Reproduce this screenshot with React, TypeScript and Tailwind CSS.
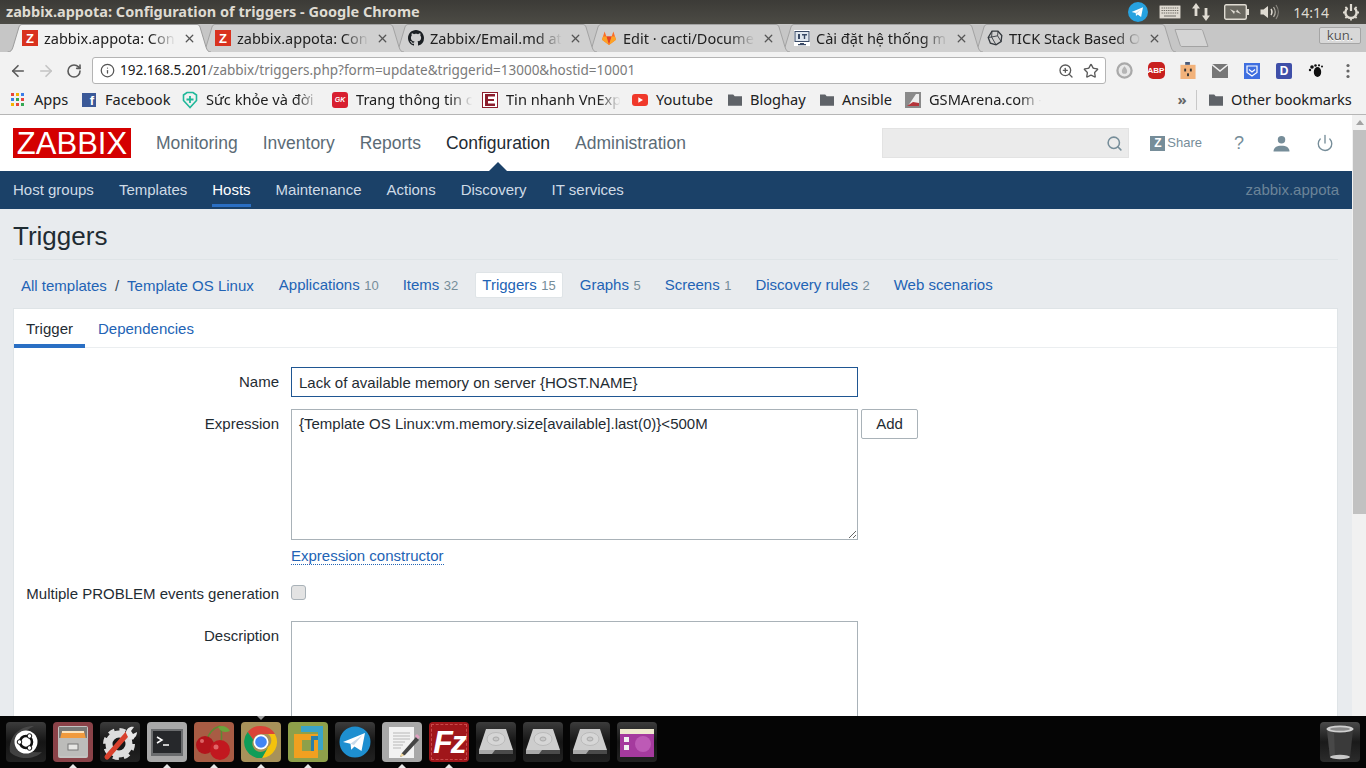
import React from 'react';
import { ArrowLeft, ArrowRight, RotateCw, Info, ZoomIn, Star, Search, Power, X } from 'lucide-react';

const uiFont = 'font-["Noto_Sans",sans-serif]';

function ZFav() {
  return (
    <span className="flex h-4 w-4 items-center justify-center bg-[#d9321f] font-['Liberation_Sans',sans-serif] text-[13px] font-bold leading-none text-white">
      Z
    </span>
  );
}

function GithubFav() {
  return (
    <svg viewBox="0 0 16 16" className="h-4 w-4" fill="#1b1f23">
      <path d="M8 0C3.58 0 0 3.58 0 8c0 3.54 2.29 6.53 5.47 7.59.4.07.55-.17.55-.38 0-.19-.01-.82-.01-1.49-2.01.37-2.53-.49-2.69-.94-.09-.23-.48-.94-.82-1.13-.28-.15-.68-.52-.01-.53.63-.01 1.08.58 1.23.82.72 1.21 1.87.87 2.33.66.07-.52.28-.87.51-1.07-1.78-.2-3.64-.89-3.64-3.95 0-.87.31-1.59.82-2.15-.08-.2-.36-1.02.08-2.12 0 0 .67-.21 2.2.82.64-.18 1.32-.27 2-.27s1.36.09 2 .27c1.53-1.04 2.2-.82 2.2-.82.44 1.1.16 1.92.08 2.12.51.56.82 1.27.82 2.15 0 3.07-1.87 3.75-3.65 3.95.29.25.54.73.54 1.48 0 1.07-.01 1.93-.01 2.2 0 .21.15.46.55.38A8.01 8.01 0 0 0 16 8c0-4.42-3.58-8-8-8z" />
    </svg>
  );
}

function GitlabFav() {
  return (
    <svg viewBox="0 0 16 16" className="h-4 w-4">
      <path d="M8 15 1 9.8l1-3.2L3.6 1.5 5.4 6.6h5.2l1.8-5.1L14 6.6l1 3.2z" fill="#fc6d26" />
      <path d="M8 15 5.4 6.6h5.2z" fill="#e24329" />
      <path d="M1 9.8 8 15 5.4 6.6H2z" fill="#fca326" />
      <path d="M15 9.8 8 15l2.6-8.4H14z" fill="#fca326" />
    </svg>
  );
}

function ItFav() {
  return (
    <svg viewBox="0 0 16 16" className="h-4 w-4">
      <rect width="16" height="16" fill="#fff" />
      <rect x="1" y="1.5" width="14" height="10" fill="#dfe6ee" stroke="#3a4a66" />
      <path d="M4 4h2v5H4zM8 4h5v1.4h-1.8V9H9.8V5.4H8z" fill="#3a4a66" />
      <path d="M6 13h4v1H6zM4 14h8v1.2H4z" fill="#3a4a66" />
    </svg>
  );
}

function TickFav() {
  return (
    <svg viewBox="0 0 16 16" className="h-4 w-4" fill="none" stroke="#33383d" strokeWidth="1.3">
      <path d="M5 1.2h6l3.8 4.3-.7 6L9 14.8l-5.6-1.6L1.2 7.5z" />
      <path d="M5 1.2 4.6 7l4.4 7.8M4.6 7 1.2 7.5M4.6 7l6-1.2 3.5 5.7M10.6 5.8 11 1.2" strokeWidth="0.9" />
    </svg>
  );
}

function Folder() {
  return (
    <svg viewBox="0 0 16 16" className="h-4 w-4" fill="#5f6368">
      <path d="M1 2.5h5.2l1.5 1.7H15v9.5H1z" />
    </svg>
  );
}

const tabs = [
  { title: 'zabbix.appota: Con', icon: <ZFav />, active: true, z: 'z-[6]' },
  { title: 'zabbix.appota: Con', icon: <ZFav />, active: false, z: 'z-[5]' },
  { title: 'Zabbix/Email.md at', icon: <GithubFav />, active: false, z: 'z-[4]' },
  { title: 'Edit · cacti/Docume', icon: <GitlabFav />, active: false, z: 'z-[3]' },
  { title: 'Cài đặt hệ thống m', icon: <ItFav />, active: false, z: 'z-[2]' },
  { title: 'TICK Stack Based O', icon: <TickFav />, active: false, z: 'z-[1]' },
];

function BrowserTab({ title, icon, active, z, first }: { title: string; icon: React.ReactNode; active: boolean; z: string; first: boolean }) {
  return (
    <div className={`relative flex h-[28px] w-[204px] shrink-0 items-center pl-[15px] ${z} ${first ? '' : '-ml-[11px]'}`}>
      <svg viewBox="0 0 204 28" className="absolute inset-0 h-full w-full">
        <path
          d="M0.5 28 C4 28 5 26 6 23 L12 3 C12.5 1.5 13.5 0.5 15 0.5 H190 C191.5 0.5 192.5 1.5 193 3 L199 23 C200 26 201 28 204 28"
          fill={active ? '#f2f2f2' : '#d0d0d0'}
          stroke={active ? '#9c9c9c' : '#a3a3a3'}
        />
      </svg>
      <span className="relative shrink-0">{icon}</span>
      <span className={`relative ml-[6px] w-[136px] overflow-hidden whitespace-nowrap text-[14.5px] leading-[28px] text-[#202020] ${uiFont} [mask-image:linear-gradient(to_right,black_78%,transparent_97%)]`}>
        {title}
      </span>
      <X className="relative ml-[3px] h-[13px] w-[13px] text-[#555]" strokeWidth={2.4} />
    </div>
  );
}

function TopIndicators() {
  return (
    <div className="ml-auto flex items-center font-normal text-[#dfdbd2]">
      <svg viewBox="0 0 20 20" className="h-5 w-5">
        <circle cx="10" cy="10" r="10" fill="#27a2e0" />
        <path d="M3.6 9.9 15 5.3l-1.9 9.6-3.4-2.4-1.7 1.6-.3-3z" fill="#fff" />
        <path d="m7.7 11.1 5.3-4-4.2 4.6" fill="#c8daea" />
      </svg>
      <svg viewBox="0 0 22 14" className="ml-[11px] h-[14px] w-[22px]">
        <rect x="0.5" y="0.5" width="21" height="13" rx="1" fill="#dfdbd2" stroke="#8a8780" />
        <path d="M2.5 3h17M2.5 5.5h17M2.5 8h17" stroke="#6f6d66" strokeDasharray="1.4 .8" />
        <path d="M5 11h12" stroke="#6f6d66" />
      </svg>
      <svg viewBox="0 0 18 20" className="ml-[11px] h-5 w-[18px]" fill="#dfdbd2">
        <path d="M4 1 8 6.5H5.4V14H2.6V6.5H0zM14 19l-4-5.500h2.600V6h2.800v7.500H18z" />
      </svg>
      <svg viewBox="0 0 25 16" className="ml-[14px] h-4 w-[25px]">
        <rect x="0.7" y="0.7" width="21.600" height="14.600" rx="1.500" fill="#6a6860" stroke="#dfdbd2" strokeWidth="1.400" />
        <rect x="23" y="5" width="2" height="6" fill="#dfdbd2" />
        <path d="m6 5 6 3 1-2.500 4 4.500-6-2.500-1 2.500z" fill="#dfdbd2" />
      </svg>
      <svg viewBox="0 0 20 18" className="ml-[11px] h-[18px] w-5" fill="none" stroke="#dfdbd2">
        <path d="M0.5 6.500h3L8 3v12l-4.500-3.500h-3z" fill="#dfdbd2" stroke="none" />
        <path d="M11 6c1.200 1.800 1.200 4.200 0 6" strokeWidth="1.500" />
        <path d="M13.500 4c2.100 3 2.100 7 0 10" strokeWidth="1.300" opacity="0.700" />
        <path d="M16 2c3 4.200 3 9.800 0 14" strokeWidth="1.200" opacity="0.450" />
      </svg>
      <span className={`ml-[13px] text-[14px] ${uiFont}`}>14:14</span>
      <svg viewBox="0 0 18 18" className="ml-[13px] mr-[6px] h-[18px] w-[18px]" fill="none" stroke="#dfdbd2">
        <path d="M5.600 5a5.600 5.600 0 1 0 6.800 0" strokeWidth="2.400" />
        <path d="M9 1v7" strokeWidth="2.200" />
        <path d="M9 15.500v2M1 9.500h2M15 9.500h2M3.400 3.900l1.400 1.400M13.200 13.700l1.400 1.400M3.400 15.100l1.400-1.400M13.200 5.300l1.400-1.400" strokeWidth="1.800" />
      </svg>
    </div>
  );
}

function ExtIcons() {
  return (
    <div className="ml-[2px] flex items-center">
      <span className="flex w-8 justify-center">
        <svg viewBox="0 0 18 18" className="h-[17px] w-[17px]">
          <circle cx="9" cy="9" r="7.500" fill="#e8e8e8" stroke="#a9a9a9" strokeWidth="2.400" />
          <path d="M9 4.500c2 2.500 2.800 3.800 2.800 5.200a2.800 2.800 0 0 1-5.600 0C6.200 8.300 7 7 9 4.500z" fill="#b5b5b5" />
        </svg>
      </span>
      <span className="flex w-8 justify-center">
        <span className="flex h-[17px] w-[17px] items-center justify-center rounded-[5px] bg-[#c8201e] font-['Liberation_Sans',sans-serif] text-[8px] font-bold leading-none text-white">
          ABP
        </span>
      </span>
      <span className="flex w-8 justify-center">
        <svg viewBox="0 0 16 18" className="h-[17px] w-[16px]">
          <rect x="0" y="3" width="16" height="15" fill="#f2b27a" />
          <rect x="5" y="0" width="5" height="3" fill="#4a5a78" />
          <rect x="4" y="7" width="2" height="3" fill="#333" />
          <rect x="10" y="7" width="2" height="3" fill="#333" />
          <rect x="7" y="12" width="2" height="3" fill="#333" />
        </svg>
      </span>
      <span className="flex w-8 justify-center">
        <svg viewBox="0 0 16 14" className="h-[14px] w-4">
          <rect width="16" height="14" fill="#777" />
          <path d="M0 .5 8 7l8-6.500" fill="none" stroke="#f2f2f2" strokeWidth="1.400" />
        </svg>
      </span>
      <span className="flex w-8 justify-center">
        <svg viewBox="0 0 16 16" className="h-4 w-4">
          <rect width="16" height="16" fill="#3f6fe0" />
          <path d="M3 3h10v6.500L8 13 3 9.500z" fill="none" stroke="#fff" strokeWidth="1.200" />
          <path d="M5 6.500 8 9l3-2.500" fill="none" stroke="#fff" strokeWidth="1.200" />
        </svg>
      </span>
      <span className="flex w-8 justify-center">
        <span className="flex h-4 w-4 items-center justify-center rounded-[2px] bg-[#3f4fa8] font-['Liberation_Sans',sans-serif] text-[12px] font-bold leading-none text-white">
          D
        </span>
      </span>
      <span className="flex w-8 justify-center">
        <svg viewBox="0 0 16 16" className="h-4 w-4" fill="#111">
          <ellipse cx="9.500" cy="9" rx="3.700" ry="5" />
          <circle cx="4" cy="4" r="1.800" />
          <circle cx="7.500" cy="2.500" r="1.300" />
          <circle cx="2" cy="7" r="1.200" />
          <circle cx="11" cy="2.300" r="1.100" />
          <circle cx="14" cy="3.500" r="1" />
        </svg>
      </span>
      <span className="flex w-8 justify-center">
        <svg viewBox="0 0 4 16" className="h-4 w-1" fill="#666">
          <circle cx="2" cy="2.500" r="1.600" />
          <circle cx="2" cy="8" r="1.600" />
          <circle cx="2" cy="13.500" r="1.600" />
        </svg>
      </span>
    </div>
  );
}

function AppsGrid() {
  const colors = ['#e8453c', '#f4b400', '#3a7de8', '#3a7de8', '#34a853', '#e8453c', '#f4b400', '#e8453c', '#34a853'];
  return (
    <span className="grid h-[13px] w-[13px] grid-cols-3 gap-[2px]">
      {colors.map((c, i) => (
        <span key={i} className="h-[3px] w-[3px]" style={{ backgroundColor: c }} />
      ))}
    </span>
  );
}

function BookmarkBar() {
  const fadeText = '[mask-image:linear-gradient(to_right,black_78%,transparent_97%)] overflow-hidden';
  return (
    <div className={`flex h-[29px] shrink-0 items-center border-b border-[#b6b6b6] bg-[#f2f2f2] pb-[1px] pl-[11px] text-[14.6px] text-[#202020] ${uiFont}`}>
      <AppsGrid />
      <span className="ml-[10px] w-[35px] whitespace-nowrap">Apps</span>
      <span className="ml-[13px] flex h-[14px] w-[14px] items-end justify-end bg-[#3b5998] pr-[2px] font-['Liberation_Sans',sans-serif] text-[13px] font-bold leading-none text-white">f</span>
      <span className="ml-[9px] w-[65px] whitespace-nowrap">Facebook</span>
      <svg viewBox="0 0 16 18" className="ml-[12px] h-[18px] w-4" fill="none" stroke="#1fb89a" strokeWidth="1.600">
        <path d="M8 16.500 1.500 9.500V4L5 1.500h6L14.500 4v5.500z" />
        <path d="M8 5v7M4.500 8.500h7" strokeWidth="1.800" />
      </svg>
      <span className={`ml-[8px] w-[116px] whitespace-nowrap ${fadeText}`}>Sức khỏe và đời</span>
      <span className="ml-[10px] flex h-4 w-4 items-center justify-center rounded-[3px] bg-[#d81f30] font-['Liberation_Sans',sans-serif] text-[7px] font-bold italic leading-none text-white">GK</span>
      <span className={`ml-[8px] w-[120px] whitespace-nowrap ${fadeText}`}>Trang thông tin c</span>
      <svg viewBox="0 0 16 16" className="ml-[6px] h-4 w-4">
        <rect x="0.500" y="0.500" width="15" height="15" fill="#fff" stroke="#8c1d2c" />
        <path d="M3 2h10v2.500H6V7h6v2H6v2.500h7V14H3z" fill="#8c1d2c" />
      </svg>
      <span className={`ml-[8px] w-[118px] whitespace-nowrap ${fadeText}`}>Tin nhanh VnExp</span>
      <svg viewBox="0 0 16 16" className="ml-[8px] h-4 w-4">
        <rect x="0" y="2" width="16" height="12" rx="3" fill="#f0392b" />
        <path d="m6.300 5.200 4.700 2.800-4.700 2.800z" fill="#fff" />
      </svg>
      <span className="ml-[8px] w-[58px] whitespace-nowrap">Youtube</span>
      <span className="ml-[13px]"><Folder /></span>
      <span className="ml-[7px] w-[56px] whitespace-nowrap">Bloghay</span>
      <span className="ml-[13px]"><Folder /></span>
      <span className="ml-[7px] w-[52px] whitespace-nowrap">Ansible</span>
      <svg viewBox="0 0 16 16" className="ml-[11px] h-4 w-4">
        <rect width="16" height="16" fill="#8a8a8a" />
        <path d="M3 14 11 2h3v9z" fill="#eee" />
        <path d="M2 14h12v-3L8 10z" fill="#b5343a" />
      </svg>
      <span className={`ml-[8px] w-[116px] whitespace-nowrap ${fadeText}`}>GSMArena.com -</span>
      <span className="ml-[130px] w-[14px] text-center text-[15px] font-bold leading-none text-[#666]">»</span>
      <span className="ml-[7px] h-[20px] w-px bg-[#c8c8c8]" />
      <span className="ml-[11px]"><Folder /></span>
      <span className="ml-[7px] whitespace-nowrap">Other bookmarks</span>
    </div>
  );
}

function ChromeFrame() {
  return (
    <div className="shrink-0">
      <div className={`flex h-[24px] items-center bg-gradient-to-b from-[#3c3b37] to-[#4c4b45] pl-[6px] text-[14.5px] font-bold text-[#dfdbd2] ${uiFont}`}>
        <span className="whitespace-nowrap">zabbix.appota: Configuration of triggers - Google Chrome</span>
        <TopIndicators />
      </div>
      <div className="relative flex h-[28px] items-end overflow-hidden bg-[#c6c6c6] pl-[7px]">
        {tabs.map((t, i) => (
          <BrowserTab key={i} title={t.title} icon={t.icon} active={t.active} z={t.z} first={i === 0} />
        ))}
        <svg viewBox="0 0 36 18" className="-ml-[2px] mb-[5px] h-[18px] w-[36px]">
          <path d="M1 .5h26c1 0 1.500.5 2 2L34 17.500H8c-1 0-1.500-.5-2-2z" fill="#d4d4d4" stroke="#a3a3a3" />
        </svg>
        <span className="absolute right-[5px] top-[3px] flex h-[17px] w-[42px] items-center justify-center rounded-[2px] border border-[#a5a5a5] bg-[#d8d8d8] text-[13px] text-[#555] [text-shadow:0_1px_0_#fff]">
          <span className={uiFont}>kun.</span>
        </span>
      </div>
      <div className="flex h-[34px] items-center bg-[#f2f2f2] pl-[4px] pt-[3px]">
        <span className="flex w-7 justify-center"><ArrowLeft className="h-[18px] w-[18px] text-[#5a5a5a]" strokeWidth={2.200} /></span>
        <span className="flex w-7 justify-center"><ArrowRight className="h-[18px] w-[18px] text-[#c4c4c4]" strokeWidth={2.200} /></span>
        <span className="flex w-7 justify-center"><RotateCw className="h-[16px] w-[16px] text-[#5a5a5a]" strokeWidth={2.400} /></span>
        <div className="ml-[4px] flex h-[27px] w-[1014px] items-center rounded-[3px] border border-[#b4b4b4] bg-white pl-[7px] pr-[6px]">
          <Info className="h-[15px] w-[15px] text-[#555]" strokeWidth={2} />
          <span className={`ml-[5px] text-[13.500px] text-[#202020] ${uiFont}`}>
            192.168.5.201<span className="text-[#7a7a7a]">/zabbix/triggers.php?form=update&amp;triggerid=13000&amp;hostid=10001</span>
          </span>
          <ZoomIn className="ml-auto h-[16px] w-[16px] text-[#5a5a5a]" strokeWidth={2} />
          <Star className="ml-[9px] h-[16px] w-[16px] text-[#5a5a5a]" strokeWidth={2} />
        </div>
        <ExtIcons />
      </div>
      <BookmarkBar />
    </div>
  );
}

function ZabbixHeader() {
  return (
    <>
      <div className="flex h-[56px] items-center bg-white pl-[13px]">
        <span className="flex h-[30px] w-[118px] items-center justify-center bg-[#d40000] text-[31px] leading-none text-white">ZABBIX</span>
        <nav className="ml-[25px] flex gap-[25px] text-[17.500px] text-[#5b6b76]">
          <span>Monitoring</span>
          <span>Inventory</span>
          <span>Reports</span>
          <span className="relative text-[#1f2c33]">
            Configuration
            <span className="absolute left-1/2 top-[32px] h-0 w-0 -translate-x-1/2 border-x-[10px] border-b-[10px] border-x-transparent border-b-[#1b4168]" />
          </span>
          <span>Administration</span>
        </nav>
        <div className="ml-auto flex h-[30px] w-[247px] items-center justify-end border border-[#e3e3e3] bg-[#ebebeb] pr-[5px]">
          <Search className="h-[17px] w-[17px] text-[#768d99]" strokeWidth={2.200} />
        </div>
        <span className="ml-[21px] flex h-[15px] w-[15px] items-center justify-center bg-[#768d99] text-[12px] font-bold leading-none text-white">Z</span>
        <span className="ml-[2px] text-[13px] text-[#768d99]">Share</span>
        <span className="ml-[32px] w-[10px] text-center text-[18px] text-[#768d99]">?</span>
        <svg viewBox="0 0 16 16" className="ml-[29px] h-[17px] w-[17px]" fill="#768d99">
          <circle cx="8" cy="4.500" r="3.500" />
          <path d="M0.500 15.500c0-4 3-5.500 7.500-5.500s7.500 1.500 7.500 5.500z" />
        </svg>
        <Power className="ml-[26px] mr-[18px] h-[18px] w-[18px] text-[#768d99]" strokeWidth={1.800} />
      </div>
      <div className="flex h-[38px] items-center bg-[#1b4168] pl-[13px] pr-[13px] text-[15px] text-[#cfdbe6]">
        <div className="flex h-full gap-[25px]">
          {['Host groups', 'Templates', 'Hosts', 'Maintenance', 'Actions', 'Discovery', 'IT services'].map((s) => (
            <span
              key={s}
              className={s === 'Hosts' ? 'flex h-[36px] items-center border-b-[3px] border-[#2a6fc4] pt-[5px] text-white' : 'flex items-center'}
            >
              {s}
            </span>
          ))}
        </div>
        <span className="ml-auto text-[#6b8498]">zabbix.appota</span>
      </div>
    </>
  );
}

function SubNav() {
  const items: [string, string][] = [
    ['Applications', '10'],
    ['Items', '32'],
    ['Triggers', '15'],
    ['Graphs', '5'],
    ['Screens', '1'],
    ['Discovery rules', '2'],
    ['Web scenarios', ''],
  ];
  return (
    <div className="flex h-[48px] items-center pl-[8px] pt-[1px] text-[15px] text-[#2263b5]">
      <span className="pt-[4px]">All templates</span>
      <span className="mx-[8px] pt-[4px] text-[#3a4a55]">/</span>
      <span className="pt-[4px]">Template OS Linux</span>
      <div className="ml-[13px] flex items-center">
        {items.map(([name, n]) => {
          let cls = 'mx-[12px] flex h-[26px] items-center pt-[2px]';
          if (name === 'Triggers') cls = 'mx-[5px] flex h-[26px] items-center rounded-[2px] border border-[#dfe4e7] bg-white px-[6px] pt-[2px]';
          return (
            <span key={name} className={cls}>
              {name}
              {n && <span className="ml-[4.500px] text-[13px] text-[#768d99]">{n}</span>}
            </span>
          );
        })}
      </div>
    </div>
  );
}

function TriggerForm() {
  const label = 'w-[265px] shrink-0 text-right text-[#1f2c33]';
  return (
    <div className="border border-b-0 border-[#dfe4e7] bg-white text-[15px] text-[#1f2c33]">
      <div className="flex h-[39px] border-b border-[#ebeef0]">
        <span className="flex h-[39px] w-[71px] items-center justify-center border-b-[4px] border-[#2a6fc4] pt-[5px]">Trigger</span>
        <span className="ml-[13px] flex items-center pt-[2px] text-[#2263b5]">Dependencies</span>
      </div>
      <div className="flex flex-col pt-[19px]">
        <div className="flex items-center">
          <span className={label}>Name</span>
          <input
            readOnly
            value="Lack of available memory on server {HOST.NAME}"
            className="ml-[12px] h-[30px] w-[567px] border border-[#1f5692] px-[7px] outline-none"
          />
        </div>
        <div className="mt-[12px] flex items-start">
          <span className={`${label} pt-[4px]`}>Expression</span>
          <textarea
            readOnly
            value="{Template OS Linux:vm.memory.size[available].last(0)}<500M"
            className="ml-[12px] h-[131px] w-[567px] border border-[#a9b2b8] px-[7px] py-[5px] leading-[18px] outline-none"
          />
          <span className="ml-[3px] flex h-[30px] w-[57px] items-center justify-center rounded-[2px] border border-[#a9b2b8] bg-white">Add</span>
        </div>
        <div className="ml-[277px] mt-[5px]">
          <span className="border-b border-dotted border-[#2263b5] text-[#2263b5]">Expression constructor</span>
        </div>
        <div className="mt-[15px] flex items-center">
          <span className={label}>Multiple PROBLEM events generation</span>
          <span className="mb-[2px] ml-[12px] h-[15px] w-[15px] rounded-[3px] border border-[#a9b2b8] bg-[#e3e3e3]" />
        </div>
        <div className="mt-[16px] flex items-start">
          <span className={`${label} pt-[4px]`}>Description</span>
          <textarea readOnly className="ml-[12px] h-[131px] w-[567px] border border-[#a9b2b8] px-[7px] py-[5px] outline-none" />
        </div>
      </div>
    </div>
  );
}

function PageScrollbar() {
  return (
    <div className="flex w-[14px] shrink-0 flex-col bg-[#f1f1f1] pl-[1px]">
      <div className="flex h-[15px] items-center justify-center">
        <span className="h-0 w-0 border-x-[4px] border-b-[5px] border-x-transparent border-b-[#a3a3a3]" />
      </div>
      <div className="h-[384px] bg-[#c1c1c1]" />
    </div>
  );
}

function Tile({ bg, children, dot, top }: { bg: string; children: React.ReactNode; dot?: boolean; top?: boolean }) {
  return (
    <div className="relative h-[52px] w-[47px] shrink-0 pt-[6px]">
      {top && <span className="absolute left-[16px] top-0 h-0 w-0 border-x-[4px] border-t-[4px] border-x-transparent border-t-[#9a9a9a]" />}
      <div className={`relative h-10 w-10 overflow-hidden rounded-[4px] ${bg}`}>{children}</div>
      {dot && <span className="absolute bottom-0 left-[16px] h-0 w-0 border-x-[4px] border-b-[4px] border-x-transparent border-b-[#e8e8e8]" />}
    </div>
  );
}

const darkTile = 'bg-gradient-to-b from-[#3c3c3c] via-[#151515] to-[#222]';

function DriveIcon() {
  return (
    <svg viewBox="0 0 40 40" className="h-10 w-10">
      <path d="M10 7h20l7 21H3z" fill="#cdcdcd" />
      <path d="M3 28h34v4H3z" fill="#4a4a4a" />
      <path d="M3 28h16l-3 4H3z" fill="#a8a8a8" />
      <ellipse cx="20" cy="17" rx="9" ry="6.500" fill="#d6d6d6" stroke="#bababa" />
      <ellipse cx="20" cy="17" rx="3" ry="2" fill="#c8c8c8" stroke="#aaa" />
    </svg>
  );
}

function Dock() {
  return (
    <div className="relative flex h-[52px] shrink-0 bg-[#050505] pl-[6px]">
      <Tile bg={darkTile}>
        <svg viewBox="0 0 40 40" className="h-10 w-10">
          <path d="M4 30C2 14 14 4 28 4c-8 4-12 8-12 14s4 14 20 12c-8 8-24 8-32 0z" fill="#5a5a5a" opacity="0.600" />
          <circle cx="20" cy="20" r="11.500" fill="#fff" />
          <circle cx="20" cy="20" r="6" fill="none" stroke="#111" strokeWidth="2.600" />
          <circle cx="13.500" cy="20" r="2.300" fill="#fff" stroke="#111" />
          <circle cx="23.500" cy="14" r="2.300" fill="#fff" stroke="#111" />
          <circle cx="23.500" cy="26" r="2.300" fill="#fff" stroke="#111" />
        </svg>
      </Tile>
      <Tile bg="bg-[#8a4248]" dot>
        <svg viewBox="0 0 40 40" className="h-10 w-10">
          <rect x="5" y="4" width="30" height="32" rx="2" fill="#c4c4c2" />
          <rect x="6" y="5" width="28" height="12" fill="#7a7a78" />
          <path d="M7 17l2-8h22l2 8z" fill="#f09a3e" />
          <path d="M9 9h22v2H9z" fill="#fbe3bd" />
          <rect x="5" y="16" width="30" height="18" fill="#bcbcba" />
          <rect x="15" y="22" width="10" height="6" fill="#e6e6e4" stroke="#777" />
        </svg>
      </Tile>
      <Tile bg={darkTile}>
        <svg viewBox="0 0 40 40" className="h-10 w-10">
          <circle cx="19" cy="22" r="10" fill="none" stroke="#dcdcdc" strokeWidth="7" />
          <circle cx="19" cy="22" r="14" fill="none" stroke="#dcdcdc" strokeWidth="4" strokeDasharray="6 5" />
          <path d="M7 35 28 11" stroke="#d8402c" strokeWidth="5" strokeLinecap="round" />
          <path d="M26 11c0-4 4-7 8-6l-3 4 2 3 4-2c0 5-4 8-8 7z" fill="#e8e8e8" />
        </svg>
      </Tile>
      <Tile bg="bg-[#a8a8a8]" dot>
        <svg viewBox="0 0 40 40" className="h-10 w-10">
          <rect x="4" y="7" width="32" height="27" fill="#6a6c6e" />
          <rect x="6" y="9" width="28" height="22" fill="#26282b" />
          <path d="m10 15 5 3-5 3" fill="none" stroke="#fff" strokeWidth="1.500" />
          <path d="M16 23h6" stroke="#fff" strokeWidth="1.500" />
        </svg>
      </Tile>
      <Tile bg="bg-[#a85c44]" dot>
        <svg viewBox="0 0 40 40" className="h-10 w-10">
          <path d="M13 18C15 10 20 6 26 4M27 22C28 14 28 8 26 4" fill="none" stroke="#5d8a32" strokeWidth="1.500" />
          <path d="M24 5c4-2 9-1 12 4-5 2-9 1-12-4z" fill="#6ca33c" />
          <circle cx="11" cy="23" r="9" fill="#b3141c" />
          <circle cx="26" cy="28" r="10" fill="#c2181f" />
          <circle cx="22" cy="25" r="2.500" fill="#e88" opacity="0.700" />
          <circle cx="8" cy="19" r="2" fill="#e88" opacity="0.700" />
        </svg>
      </Tile>
      <Tile bg="bg-[#a8925a]" dot top>
        <svg viewBox="0 0 40 40" className="h-10 w-10">
          <path d="M20 4a16 16 0 0 1 13.900 8H20a8 8 0 0 0-7.700 5.800L6.700 10A16 16 0 0 1 20 4z" fill="#db4437" />
          <path d="M33.900 12A16 16 0 0 1 21 36l6-11a8 8 0 0 0 0-13z" fill="#f4c20d" />
          <path d="M6.700 10A16 16 0 0 0 21 36l6-10.500a8 8 0 0 1-14.700-7.700z" fill="#0f9d58" />
          <circle cx="20" cy="20" r="7.500" fill="#fff" />
          <circle cx="20" cy="20" r="5.800" fill="#4285f4" />
        </svg>
      </Tile>
      <Tile bg="bg-[#8ea04a]" dot>
        <svg viewBox="0 0 40 40" className="h-10 w-10">
          <path d="M13 4h22v24h-5V10H13z" fill="#3aa4c8" />
          <path fillRule="evenodd" d="M6 12h24v24H6zM14 18v11h9V18z" fill="#f0a020" />
          <path d="M23 14h7v4h-7zM23 18h3v11h-3z" fill="#2b7fa8" />
          <path d="M15 19h7v9h-7z" fill="#8ea04a" />
        </svg>
      </Tile>
      <Tile bg={darkTile}>
        <svg viewBox="0 0 40 40" className="h-10 w-10">
          <circle cx="20" cy="20" r="15.500" fill="#1e8fd0" />
          <path d="M8 20 30 11l-3.500 18-7-4.500-3.300 3.200-.7-6z" fill="#fff" />
          <path d="m15.500 21.700 12-8.700-8.500 10z" fill="#c8daea" />
        </svg>
      </Tile>
      <Tile bg="bg-[#a8a8a8]" dot>
        <svg viewBox="0 0 40 40" className="h-10 w-10">
          <rect x="7" y="5" width="25" height="31" fill="#f2f2f2" />
          <path d="M11 11h17M11 14h17M11 17h17M11 20h12M11 23h10M11 26h8" stroke="#b8b8b8" />
          <path d="M20 31 34 15l3 3-14 15-5 2z" fill="#444" />
          <path d="M33 14l2-2 3 3-2 2z" fill="#e0a0c0" />
          <path d="m18 35 1.500-4 3 2.500z" fill="#f0d8a0" />
        </svg>
      </Tile>
      <Tile bg="bg-[#a0161a]" dot>
        <span className="absolute inset-[2px] flex items-center justify-center border border-dashed border-[#c84a4a] font-['Liberation_Sans',sans-serif] text-[32px] font-bold italic leading-none tracking-[-2px] text-white">
          Fz
        </span>
      </Tile>
      <Tile bg={darkTile}><DriveIcon /></Tile>
      <Tile bg={darkTile}><DriveIcon /></Tile>
      <Tile bg={darkTile}><DriveIcon /></Tile>
      <Tile bg={darkTile}>
        <svg viewBox="0 0 40 40" className="h-10 w-10">
          <rect x="3" y="7" width="34" height="28" fill="#a53a9e" />
          <circle cx="26" cy="22" r="8" fill="#c868c0" opacity="0.700" />
          <rect x="3" y="7" width="34" height="5" fill="#efe9cf" />
          <rect x="7" y="15" width="5" height="5" fill="#f2f2f2" />
          <rect x="7" y="23" width="5" height="5" fill="#f2f2f2" />
        </svg>
      </Tile>
      <div className="ml-auto mr-[6px] mt-[6px] h-10 w-10 overflow-hidden rounded-[4px] bg-gradient-to-b from-[#4a4a4a] via-[#1a1a1a] to-[#2c2c2c]">
        <svg viewBox="0 0 40 40" className="h-10 w-10">
          <path d="M7 8h26l-3 28H10z" fill="#3a3a3a" />
          <path d="M7 8h7l1 28h-5z" fill="#555" opacity="0.500" />
          <ellipse cx="20" cy="7" rx="13.500" ry="3.500" fill="#d0d0d0" />
          <ellipse cx="20" cy="7" rx="10" ry="1.800" fill="#8a8a8a" />
          <ellipse cx="20" cy="35" rx="10" ry="2.200" fill="#c8c8c8" />
        </svg>
      </div>
    </div>
  );
}

export default function App() {
  return (
    <div className="flex h-[768px] w-[1366px] flex-col overflow-hidden bg-black font-['Liberation_Sans',Arial,sans-serif]">
      <ChromeFrame />
      <div className="flex min-h-0 flex-1 overflow-hidden">
        <div className="min-w-0 flex-1 overflow-hidden bg-[#e8ebee]">
          <ZabbixHeader />
          <div className="pl-[13px] pr-[14px]">
            <div className="flex h-[51px] items-center border-b border-[#dfe4e7] pt-[4px]">
              <h1 className="text-[26px] leading-none text-[#1f2c33]">Triggers</h1>
            </div>
            <SubNav />
            <TriggerForm />
          </div>
        </div>
        <PageScrollbar />
      </div>
      <Dock />
    </div>
  );
}
